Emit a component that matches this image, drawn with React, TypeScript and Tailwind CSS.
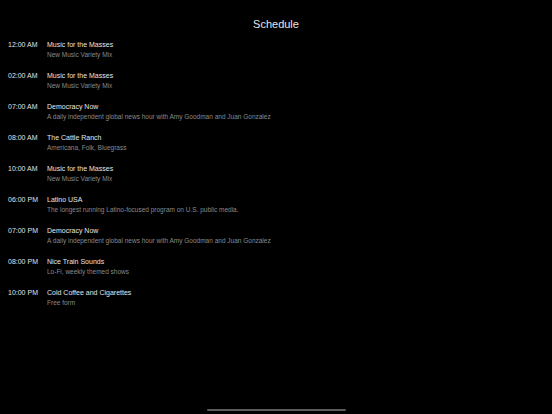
const shows = [
  { time: "12:00 AM", title: "Music for the Masses", sub: "New Music Variety Mix" },
  { time: "02:00 AM", title: "Music for the Masses", sub: "New Music Variety Mix" },
  { time: "07:00 AM", title: "Democracy Now", sub: "A daily independent global news hour with Amy Goodman and Juan Gonzalez" },
  { time: "08:00 AM", title: "The Cattle Ranch", sub: "Americana, Folk, Bluegrass" },
  { time: "10:00 AM", title: "Music for the Masses", sub: "New Music Variety Mix" },
  { time: "06:00 PM", title: "Latino USA", sub: "The longest running Latino-focused program on U.S. public media." },
  { time: "07:00 PM", title: "Democracy Now", sub: "A daily independent global news hour with Amy Goodman and Juan Gonzalez" },
  { time: "08:00 PM", title: "Nice Train Sounds", sub: "Lo-Fi, weekly themed shows" },
  { time: "10:00 PM", title: "Cold Coffee and Cigarettes", sub: "Free form" },
];

export default function App() {
  return (
    <div
      className="flex h-[414px] w-[552px] flex-col overflow-hidden bg-black antialiased"
      style={{ fontFamily: '"Liberation Sans", Arial, sans-serif' }}
    >
      <header className="flex h-[39px] items-start justify-center pt-[17px]">
        <h1 className="text-[11px] leading-[14px] text-[#e6e6e6]">Schedule</h1>
      </header>

      <ul className="flex flex-col">
        {shows.map((show, i) => (
          <li key={i} className="flex h-[31px] pl-[8px]">
            <span className="w-[39px] shrink-0 text-[7px] leading-[11px] text-[#e0e0e0]">
              {show.time}
            </span>
            <div className="flex flex-col">
              <span className="text-[7px] leading-[11px] text-[#e6e6e6]">{show.title}</span>
              <span className="text-[6.5px] leading-[10px] text-[#8a8a8a]">{show.sub}</span>
            </div>
          </li>
        ))}
      </ul>

      <div className="mt-auto flex justify-center pb-[3px]">
        <div className="h-[2px] w-[139px] rounded-full bg-[#5c5c5c]" />
      </div>
    </div>
  );
}
